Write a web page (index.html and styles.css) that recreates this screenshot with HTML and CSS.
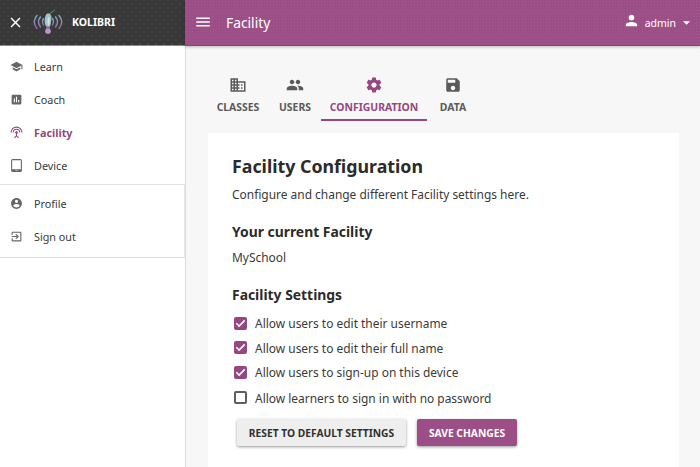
FILE: index.html
```html
<!DOCTYPE html>
<html lang="en">
<head>
<meta charset="utf-8">
<title>Facility</title>
<link rel="stylesheet" href="styles.css">
</head>
<body>
<div class="app">
  <aside class="sidebar">
    <header class="brand">
      <svg class="close" viewBox="0 0 24 24"><path d="M19 6.41 17.59 5 12 10.59 6.41 5 5 6.41 10.59 12 5 17.59 6.41 19 12 13.41 17.59 19 19 17.59 13.41 12z"/></svg>
      <svg class="logo" viewBox="0 0 30 26">
        <defs><linearGradient id="wave" x1="0" y1="0" x2="0" y2="1"><stop offset="0" stop-color="#83b1be"/><stop offset="1" stop-color="#9567a8"/></linearGradient></defs>
        <g fill="none" stroke="url(#wave)" stroke-width="1.4" stroke-linecap="round">
          <path d="M4 6.500Q-1.500 12.500 4 19.500M7.500 8Q3.500 12.500 7.500 18M10.500 9.500Q8.500 12.500 10.500 16"/>
          <path d="M26 6.500Q31.500 12.500 26 19.500M22.500 8Q26.500 12.500 22.500 18M19.500 9.500Q21.500 12.500 19.500 16"/>
        </g>
        <path d="M15.500 5.500 22 .8" stroke="#8b8f89" stroke-width=".8"/>
        <path d="M15 4.500c2.500 0 3.900 2 3.400 5.500s-.5 5-1.500 8h-3.400c-1.900-3-2.200-5-1.700-8s1-5.500 3.200-5.500z" fill="#9dc3c9"/>
        <path d="M15.500 7c1.800 3 1.500 7 0 10.500-1.200-3-1.500-7 0-10.500z" fill="#d5e2df"/>
        <path d="m14 18-2 4c0 2 1.300 3 3 3s3-1 3-3l-2-4z" fill="#c98ad2"/>
        <path d="M13.500 17.500h3v2h-3z" fill="#697880"/>
      </svg>
      <span class="brand-name">KOLIBRI</span>
    </header>
    <nav class="menu">
      <a class="item"><svg viewBox="0 0 24 24"><path d="M5 13.180v4L12 21l7-3.820v-4L12 17l-7-3.820zM12 3 1 9l11 6 9-4.910V17h2V9L12 3z"/></svg><span>Learn</span></a>
      <a class="item"><svg viewBox="0 0 24 24"><path d="M19 3H5c-1.100 0-2 .9-2 2v14c0 1.100.9 2 2 2h14c1.100 0 2-.9 2-2V5c0-1.100-.9-2-2-2zM9 17H7v-7h2v7zm4 0h-2V7h2v10zm4 0h-2v-4h2v4z"/></svg><span>Coach</span></a>
      <a class="item active"><svg viewBox="0 0 24 24"><path d="M12 5a7 7 0 0 0-7 7h2a5 5 0 0 1 10 0h2a7 7 0 0 0-7-7zm1 9.290a2.500 2.500 0 1 0-2 0v3.300L7.590 21 9 22.410l3-3 3 3L16.410 21 13 17.590v-3.300zM12 1A11 11 0 0 0 1 12h2a9 9 0 0 1 18 0h2A11 11 0 0 0 12 1z"/></svg><span>Facility</span></a>
      <a class="item"><svg viewBox="0 0 24 24"><path d="M19 0H5a3 3 0 0 0-3 3v18a3 3 0 0 0 3 3h14a3 3 0 0 0 3-3V3a3 3 0 0 0-3-3zm-5 22h-4v-1h4v1zm6-3H4V2.500h16V19z"/></svg><span>Device</span></a>
    </nav>
    <nav class="menu account">
      <a class="item"><svg viewBox="0 0 24 24"><path d="M12 2C6.480 2 2 6.480 2 12s4.480 10 10 10 10-4.480 10-10S17.520 2 12 2zm0 3c1.660 0 3 1.340 3 3s-1.340 3-3 3-3-1.340-3-3 1.340-3 3-3zm0 14.200c-2.500 0-4.710-1.280-6-3.220.03-1.990 4-3.080 6-3.080 1.990 0 5.970 1.090 6 3.080-1.290 1.940-3.500 3.220-6 3.220z"/></svg><span>Profile</span></a>
      <a class="item"><svg viewBox="0 0 24 24"><path d="M10.090 15.590 11.500 17l5-5-5-5-1.410 1.410L12.670 11H3v2h9.670l-2.580 2.590zM19 3H5c-1.110 0-2 .9-2 2v4h2V5h14v14H5v-4H3v4c0 1.100.89 2 2 2h14c1.100 0 2-.9 2-2V5c0-1.100-.9-2-2-2z"/></svg><span>Sign out</span></a>
    </nav>
  </aside>

  <div class="page">
    <header class="topbar">
      <svg class="burger" viewBox="0 0 24 24"><path d="M3 18h18v-2H3v2zm0-5h18v-2H3v2zm0-7v2h18V6H3z"/></svg>
      <h1>Facility</h1>
      <div class="user">
        <svg class="person" viewBox="0 0 24 24"><path d="M12 12c2.210 0 4-1.790 4-4s-1.790-4-4-4-4 1.790-4 4 1.790 4 4 4zm0 2c-2.670 0-8 1.340-8 4v2h16v-2c0-2.660-5.330-4-8-4z"/></svg>
        <span>admin</span>
        <svg class="caret" viewBox="0 0 10 5"><path d="M0 0h10L5 5z"/></svg>
      </div>
    </header>
    <nav class="tabs">
      <a class="tab classes"><svg viewBox="0 0 24 24"><path d="M12 7V3H2v18h20V7H12zM6 19H4v-2h2v2zm0-4H4v-2h2v2zm0-4H4V9h2v2zm0-4H4V5h2v2zm4 12H8v-2h2v2zm0-4H8v-2h2v2zm0-4H8V9h2v2zm0-4H8V5h2v2zm10 12h-8v-2h2v-2h-2v-2h2v-2h-2V9h8v10zm-2-8h-2v2h2v-2zm0 4h-2v2h2v-2z"/></svg><span>CLASSES</span></a>
      <a class="tab users"><svg viewBox="0 0 24 24"><path d="M16 11c1.660 0 2.990-1.340 2.990-3S17.660 5 16 5s-3 1.340-3 3 1.340 3 3 3zm-8 0c1.660 0 2.990-1.340 2.990-3S9.660 5 8 5 5 6.340 5 8s1.340 3 3 3zm0 2c-2.330 0-7 1.170-7 3.500V19h14v-2.500C15 14.170 10.330 13 8 13zm8 0c-.29 0-.62.020-.97.050C16.190 13.890 17 15.020 17 16.500V19h6v-2.500c0-2.330-4.670-3.500-7-3.500z"/></svg><span>USERS</span></a>
      <a class="tab config selected"><svg viewBox="0 0 24 24"><path d="M19.430 12.980c.04-.32.070-.64.070-.98s-.03-.66-.07-.98l2.110-1.650c.19-.15.240-.42.120-.64l-2-3.460c-.12-.22-.39-.3-.61-.22l-2.490 1c-.52-.4-1.080-.73-1.690-.98l-.38-2.650C14.460 2.180 14.250 2 14 2h-4c-.25 0-.46.180-.49.420l-.38 2.650c-.61.250-1.170.59-1.690.98l-2.490-1c-.23-.09-.49 0-.61.220l-2 3.460c-.13.220-.07.490.12.640l2.110 1.650c-.04.32-.07.650-.07.980s.03.660.07.980l-2.110 1.650c-.19.150-.24.420-.12.640l2 3.460c.12.220.39.300.61.220l2.490-1c.52.400 1.080.730 1.690.980l.38 2.650c.03.240.24.420.49.420h4c.25 0 .46-.18.490-.42l.38-2.650c.61-.25 1.170-.59 1.690-.98l2.490 1c.23.090.49 0 .61-.22l2-3.460c.12-.22.070-.49-.12-.64l-2.110-1.650zM12 15.500c-1.930 0-3.500-1.570-3.500-3.500s1.570-3.500 3.500-3.500 3.500 1.570 3.500 3.500-1.570 3.500-3.500 3.500z"/></svg><span>CONFIGURATION</span></a>
      <a class="tab data"><svg viewBox="0 0 24 24"><path d="M17 3H5c-1.110 0-2 .9-2 2v14c0 1.100.89 2 2 2h14c1.100 0 2-.9 2-2V7l-4-4zm-5 16c-1.660 0-3-1.340-3-3s1.340-3 3-3 3 1.340 3 3-1.340 3-3 3zm3-10H5V5h10v4z"/></svg><span>DATA</span></a>
    </nav>
    <main class="card">
      <h2>Facility Configuration</h2>
      <p>Configure and change different Facility settings here.</p>
      <h3>Your current Facility</h3>
      <p class="name">MySchool</p>
      <h3 class="settings">Facility Settings</h3>
      <div class="options">
        <label class="option"><span class="box checked"><svg viewBox="0 0 14 14"><path d="m2.500 6.700 3 3L11.500 3.600"/></svg></span><span>Allow users to edit their username</span></label>
        <label class="option"><span class="box checked"><svg viewBox="0 0 14 14"><path d="m2.500 6.700 3 3L11.500 3.600"/></svg></span><span>Allow users to edit their full name</span></label>
        <label class="option"><span class="box checked"><svg viewBox="0 0 14 14"><path d="m2.500 6.700 3 3L11.500 3.600"/></svg></span><span>Allow users to sign-up on this device</span></label>
        <label class="option last"><span class="box"></span><span>Allow learners to sign in with no password</span></label>
      </div>
      <div class="actions">
        <button class="reset">RESET TO DEFAULT SETTINGS</button>
        <button class="save">SAVE CHANGES</button>
      </div>
    </main>
  </div>
</div>
</body>
</html>
```
FILE: styles.css
```css
* { box-sizing: border-box; }
body {
  margin: 0;
  font-family: "Noto Sans", sans-serif;
  font-size: 11.94px;
  color: #3a3a3a;
  background: #f7f7f7;
}
h1, h2, h3, p { margin: 0; white-space: nowrap; }
svg { display: block; flex: none; fill: currentColor; }
.app { display: flex; width: 700px; height: 467px; overflow: hidden; }

.sidebar { width: 185px; flex: none; background: #fff; box-shadow: 1px 0 0 #dcdcdc; }
.brand {
  height: 46px; display: flex; align-items: center;
  padding: 0 0 1px 7px; color: #fff;
  background-color: #383838;
  background-image: radial-gradient(circle, #484848 0.5px, transparent 1px), radial-gradient(circle, #484848 0.5px, transparent 1px);
  background-size: 8px 8px;
  background-position: 0 0, 4px 4px;
  border-bottom: 1px solid #8a8a8a;
}
.close { width: 17px; height: 17px; }
.logo { width: 30px; height: 26px; margin-left: 9px; }
.brand-name { font-size: 10.5px; font-weight: 700; margin-left: 9px; }
.menu { padding: 4px 0 2px; border-bottom: 1px solid #e2e2e2; width: 185px; }
.account { padding: 2px 0 5px; height: 73px; border-right: 1px solid #e8e8e8; }
.item { height: 33px; display: flex; align-items: center; gap: 11px; padding-left: 10px; font-size: 10.8px; }
.item svg { width: 13px; height: 13px; color: #666; }
.item.active, .item.active svg { color: #964781; }
.item.active { font-weight: 700; }

.page { flex: 1; min-width: 0; }
.topbar {
  height: 46px; display: flex; align-items: center; padding: 0 10px 1px 9px; color: #fff;
  background-color: #9c4f86;
  background-image: radial-gradient(circle, #a3588d 0.5px, transparent 1px);
  background-size: 3px 3px;
  border-bottom: 1px solid #914078;
  box-shadow: 0 1px 3px rgba(0, 0, 0, 0.25);
}
.burger { width: 18px; height: 18px; }
h1 { font-size: 13.8px; font-weight: 400; margin-left: 14px; }
.user { display: flex; align-items: center; margin-left: auto; padding-top: 1px; font-size: 10.5px; }
.person { width: 17px; height: 17px; margin: -4px 5px 0 0; }
.caret { width: 7px; height: 4px; margin-left: 7px; }

.tabs { display: flex; padding: 27px 0 0 22px; height: 87px; }
.tab {
  height: 48px; display: flex; flex-direction: column; align-items: center; gap: 6px;
  font-size: 10.42px; font-weight: 700; color: #5a5a5a; padding: 3px 0 0; border-bottom: 2px solid transparent;
}
.tab svg { width: 18px; height: 18px; }
.classes { width: 62px; }
.users { width: 52px; }
.config { width: 106px; }
.data { width: 52px; }
.selected { color: #964781; border-bottom-color: #964781; }

.card { margin-left: 23px; width: 471px; height: 334px; background: #fff; padding: 20px 24px; }
h2 { font-size: 17.8px; line-height: 26px; font-weight: 700; color: #2b2b2b; }
p { line-height: 18px; margin-top: 6px; }
h3 { font-size: 13.9px; line-height: 20px; margin-top: 19px; font-weight: 700; color: #2b2b2b; }
.name { margin-top: 6px; }
.settings { margin-top: 19px; }
.options { padding: 6px 0 0 2px; }
.option { height: 24.5px; display: flex; align-items: center; gap: 8px; white-space: nowrap; }
.last { height: 26px; }
.box { width: 13px; height: 13px; border: 2px solid #5e5e5e; border-radius: 2px; flex: none; }
.checked { border: 0; background: #964781; }
.box svg { width: 13px; height: 13px; fill: none; stroke: #fff; stroke-width: 1.700; }
.actions { display: flex; gap: 11px; padding: 8.500px 0 0 5px; }
button {
  font: 700 10.25px "Noto Sans", sans-serif; height: 27px; border: 0; border-radius: 2px; padding: 0;
  white-space: nowrap; box-shadow: 0 1px 3px rgba(0, 0, 0, 0.4);
}
.reset { width: 169px; color: #303030; background: #eee; }
.save { width: 100px; color: #fff; background: #9c4f86; }
```
